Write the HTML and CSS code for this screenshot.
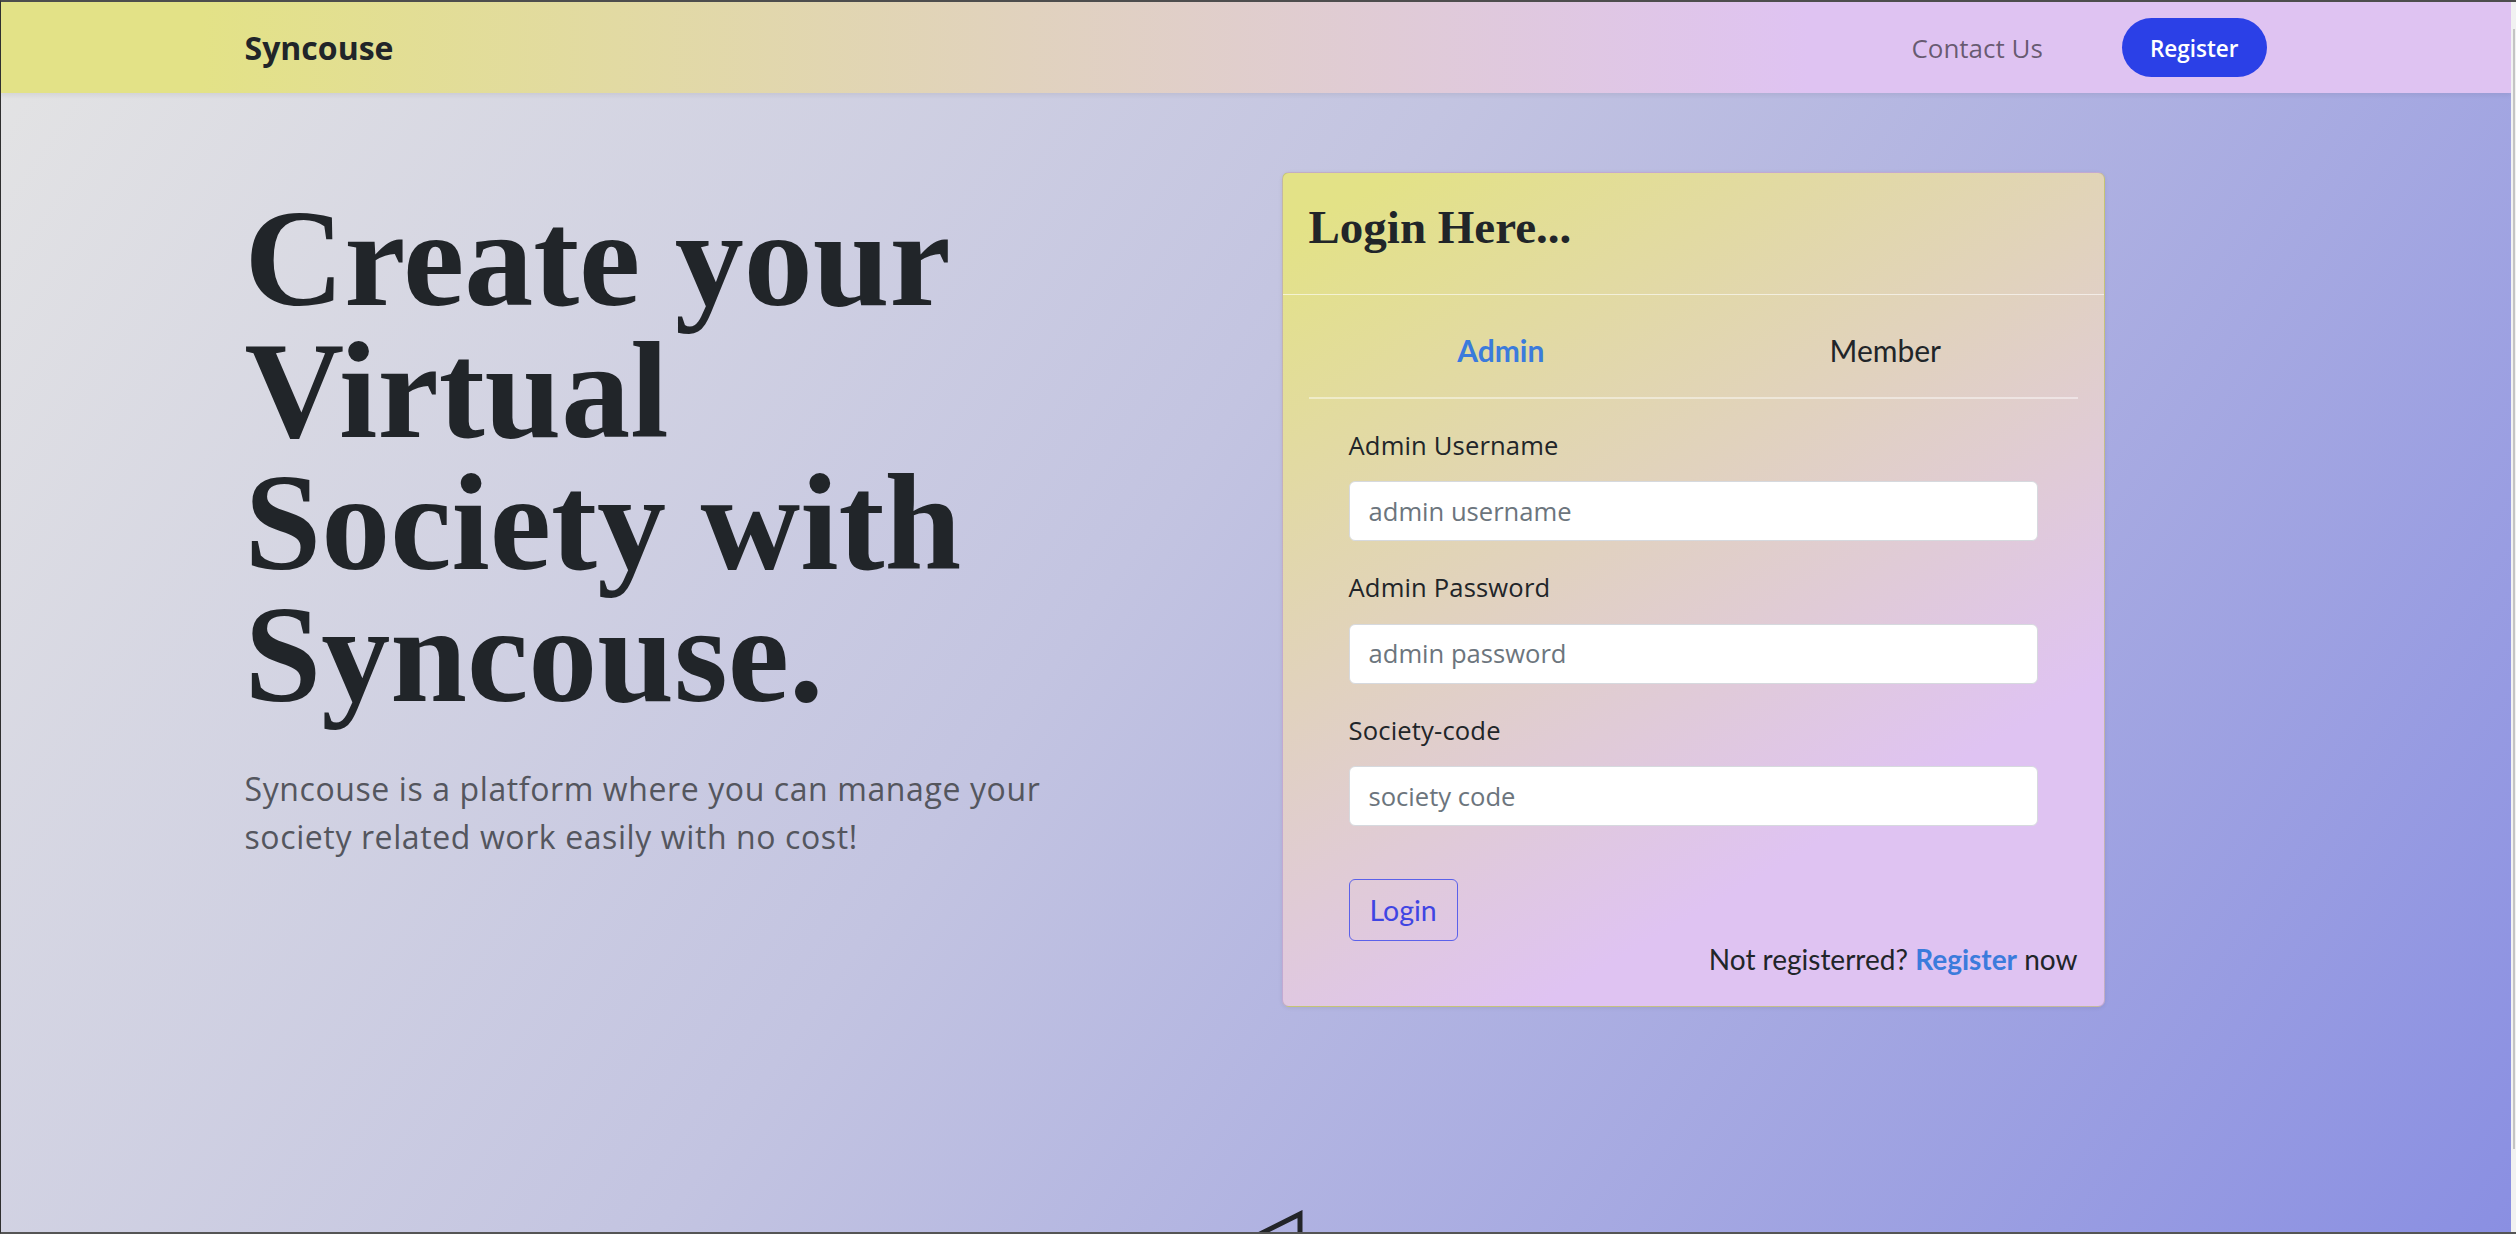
FILE: index.html
```html
<!DOCTYPE html>
<html lang="en">
<head>
<meta charset="utf-8">
<title>Syncouse</title>
<link rel="stylesheet" href="styles.css">
</head>
<body>
<div class="page">
  <div class="viewport">
    <header class="navbar">
      <div class="container nav-inner">
        <a class="brand" href="#">Syncouse</a>
        <nav class="nav-links">
          <a class="nav-link" href="#">Contact Us</a>
          <a class="btn-register" href="#">Register</a>
        </nav>
      </div>
    </header>

    <main class="container hero">
      <section class="intro">
        <h1 class="hero-title">Create your Virtual Society with Syncouse.</h1>
        <p class="lead">Syncouse is a platform where you can manage your society related work easily with no cost!</p>
      </section>

      <section class="card">
        <div class="card-header">
          <h2 class="card-title">Login Here...</h2>
        </div>
        <div class="card-body">
          <div class="tabs">
            <button class="tab active" type="button">Admin</button>
            <button class="tab" type="button">Member</button>
          </div>
          <form class="login-form">
            <div class="field">
              <label class="field-label" for="admin-user">Admin Username</label>
              <input class="field-input" id="admin-user" type="text" placeholder="admin username">
            </div>
            <div class="field">
              <label class="field-label" for="admin-pass">Admin Password</label>
              <input class="field-input" id="admin-pass" type="password" placeholder="admin password">
            </div>
            <div class="field">
              <label class="field-label" for="society-code">Society-code</label>
              <input class="field-input" id="society-code" type="text" placeholder="society code">
            </div>
            <button class="btn-login" type="button">Login</button>
          </form>
          <p class="signup">Not registerred? <a class="signup-link" href="#">Register</a> now</p>
        </div>
      </section>
    </main>

    <div class="container illustration">
      <svg class="plane" width="320" height="260" viewBox="0 0 320 260" aria-hidden="true">
        <path d="M150 4 L10 74 L150 150 Z M150 4 L150 230 L300 245" fill="none" stroke="#222428" stroke-width="5" stroke-linejoin="miter"/>
      </svg>
    </div>
  </div>
  <div class="scrollbar"><div class="scroll-thumb"></div></div>
</div>
<div class="frame"></div>
</body>
</html>
```

FILE: styles.css
```css
* {
  box-sizing: border-box;
}

html,
body {
  margin: 0;
  height: 100%;
}

body {
  font-family: "Open Sans", "Liberation Sans", sans-serif;
  color: #212529;
  overflow: hidden;
}

.page {
  display: flex;
  height: 100vh;
}

.viewport {
  flex: 1;
  min-width: 0;
  overflow: hidden;
  background: linear-gradient(125deg, #e4e4e4 0%, #c3c4e1 45%, #8a8fe2 100%);
}

.scrollbar {
  width: 5px;
  flex: none;
  background: #f1f1f1;
  padding: 29px 1px 0 2px;
}

.scroll-thumb {
  width: 2px;
  height: 1120px;
  background: #c4c4c4;
}

.frame {
  position: fixed;
  inset: 0;
  border-top: 2px solid #4d4d4d;
  border-left: 1px solid #2f2f2f;
  border-bottom: 2px solid #555;
  pointer-events: none;
}

.container {
  width: 2022px;
  margin: 0 auto;
}

/* Navbar */
.navbar {
  height: 93px;
  background: linear-gradient(90deg, #e3e287 8%, #dfc3f2 72%);
  box-shadow: 0 2px 5px rgba(0, 0, 0, 0.07);
}

.nav-inner {
  height: 100%;
  display: flex;
  align-items: center;
  justify-content: space-between;
}

.brand {
  font-size: 32px;
  font-weight: 700;
  color: #212529;
  text-decoration: none;
  margin-top: 2px;
}

.nav-links {
  display: flex;
  align-items: center;
  gap: 79px;
  margin-top: 2px;
}

.nav-link {
  font-size: 26px;
  color: rgba(0, 0, 0, 0.55);
  text-decoration: none;
}

.btn-register {
  display: inline-block;
  font-size: 22.5px;
  font-weight: 600;
  line-height: 34px;
  padding: 14px 28px 11px;
  border-radius: 30px;
  background: #2b40e7;
  color: #fff;
  text-decoration: none;
}

/* Hero */
.hero {
  display: grid;
  grid-template-columns: 1037px 823px;
  align-items: start;
  padding-top: 79px;
}

.hero-title {
  font-family: "Liberation Serif", "Times New Roman", serif;
  font-weight: 700;
  font-size: 138px;
  line-height: 132px;
  max-width: 800px;
  margin: 21px 0 0;
  color: #212529;
}

.lead {
  font-size: 32px;
  line-height: 48px;
  letter-spacing: 0.6px;
  max-width: 860px;
  margin: 44px 0 0;
  color: #54565e;
}

/* Card */
.card {
  border: 1px solid rgba(0, 0, 0, 0.13);
  border-radius: 7px;
  background: linear-gradient(150deg, #e3e287 5%, #dfc3f2 75%);
  box-shadow: 0 1px 4px rgba(0, 0, 0, 0.08);
}

.card-header {
  padding: 26px 26px 39px;
  border-bottom: 1px solid rgba(255, 255, 255, 0.6);
}

.card-title {
  font-family: "Liberation Serif", "Times New Roman", serif;
  font-weight: 700;
  font-size: 47px;
  line-height: 56px;
  margin: 0;
  color: #212529;
}

.card-body {
  padding: 0 26px 29px;
}

.tabs {
  display: grid;
  grid-template-columns: 1fr 1fr;
  align-items: center;
  height: 104px;
  padding-top: 8px;
  border-bottom: 2px solid rgba(255, 255, 255, 0.45);
}

.tab {
  font-family: Lato, "Noto Sans", sans-serif;
  font-size: 30px;
  background: none;
  border: 0;
  padding: 0;
  color: #212529;
  cursor: pointer;
}

.tab.active {
  color: #3b7bdc;
  font-weight: 700;
}

.login-form {
  padding: 28px 40px 0;
}

.field {
  margin-bottom: 28px;
}

.field-label {
  display: block;
  font-size: 25.6px;
  line-height: 38.4px;
  letter-spacing: 0.15px;
  margin-bottom: 16px;
  color: #212529;
}

.field-input {
  display: block;
  width: 100%;
  height: 60px;
  padding: 0 19px;
  font-family: "Open Sans", sans-serif;
  font-size: 25.6px;
  color: #212529;
  background: #fff;
  border: 1px solid #d6d9de;
  border-radius: 6px;
}

.field-input::placeholder {
  color: #6c757d;
}

.btn-login {
  display: block;
  margin-top: 53px;
  height: 62px;
  padding: 0 20px;
  font-family: Lato, "Noto Sans", sans-serif;
  font-size: 28.5px;
  color: #3f45e3;
  background: transparent;
  border: 1.5px solid #5b61ea;
  border-radius: 6px;
}

.signup {
  margin: 0;
  text-align: right;
  font-family: Lato, "Noto Sans", sans-serif;
  font-size: 28px;
  line-height: 36px;
  color: #212529;
}

.signup-link {
  color: #3b7bdc;
  font-weight: 700;
  text-decoration: none;
}

/* Illustration below the fold */
.illustration {
  margin-top: 203px;
}

.plane {
  display: block;
  margin-left: 905px;
}
```
